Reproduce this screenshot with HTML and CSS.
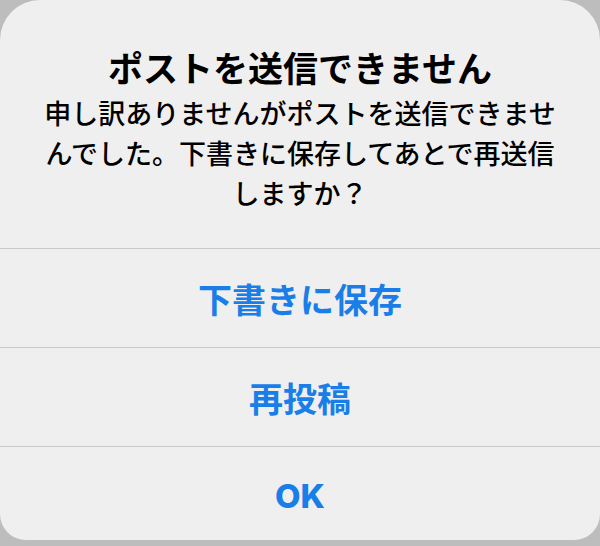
FILE: index.html
```html
<!DOCTYPE html>
<html lang="ja">
<head>
<meta charset="UTF-8">
<meta name="viewport" content="width=device-width, initial-scale=1.0">
<title>ポストを送信できません</title>
<link rel="stylesheet" href="styles.css">
</head>
<body>

<div class="alerta">
    <div class="conteudo">
        <h1 class="titulo">ポストを送信できません</h1>
        <p class="mensagem">申し訳ありませんがポストを送信できませんでした。下書きに保存してあとで再送信しますか？</p>
    </div>
    <button class="acao">下書きに保存</button>
    <button class="acao">再投稿</button>
    <button class="acao ok">OK</button>
</div>

</body>
</html>
```

FILE: styles.css
```css
/* Fundo atrás do alerta */
body {
    margin: 0;
    background-color: #bdbdbd;
    font-family: "Noto Sans CJK JP", "Noto Sans", sans-serif;
    color: #000000;
}

/* Caixa do alerta */
.alerta {
    width: 600px;
    height: 540px;
    background-color: #efefef;
    border-radius: 40px 40px 26px 26px;
    display: flex;
    flex-direction: column;
    overflow: hidden;
}

/* Título e mensagem */
.conteudo {
    padding: 45px 40px 35px;
    text-align: center;
}

.titulo {
    margin: 0;
    font-size: 35px;
    line-height: 44px;
    font-weight: 700;
}

.mensagem {
    margin: 4px 0 0;
    font-size: 27px;
    line-height: 40px;
    font-weight: 500;
}

/* Botões */
.acao {
    height: 99px;
    border: none;
    border-top: 1px solid #c9c9c9;
    background: none;
    color: #1a7ee9;
    font-family: inherit;
    font-size: 34px;
    font-weight: 600;
    padding: 0;
}

/* Botão OK, em fonte latina mais pesada */
.acao.ok {
    flex: 1;
    padding-top: 4px;
    font-family: Inter, "Noto Sans CJK JP", sans-serif;
    font-size: 33px;
    font-weight: 800;
}
```
